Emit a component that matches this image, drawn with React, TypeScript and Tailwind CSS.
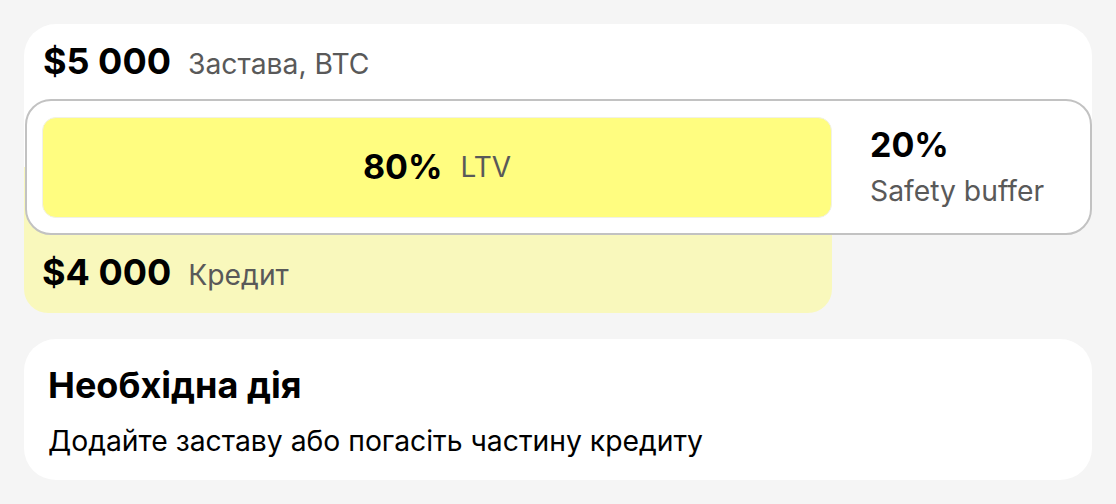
import React from 'react'

const font = { fontFamily: 'Inter, "Noto Sans", sans-serif' }

const LtvCard = () => {
  return (
    <div className="flex flex-col">
      {/* collateral */}
      <div className="h-[143px] rounded-t-[32px] bg-white pl-[19px] pt-[17px]">
        <div className="flex items-baseline gap-[17px]">
          <span className="text-[36px] leading-[40px] font-bold text-black">$5 000</span>
          <span className="text-[28.3px] leading-[36px] text-[#595959]">Застава, BTC</span>
        </div>
      </div>

      {/* ltv box, lies over both cards */}
      <div className="relative z-10 -mt-[68px] ml-px flex h-[136px] items-center rounded-[26px] border-2 border-[#c2c2c2] bg-white p-[15px]">
        <div className="flex h-[101px] w-[790px] items-center justify-center gap-[18px] rounded-[14px] border border-[#f1f1e6] bg-[#fffd80]">
          <span className="text-[34px] leading-[40px] font-bold text-black">80%</span>
          <span className="text-[28px] leading-[36px] text-[#595959]">LTV</span>
        </div>
        <div className="ml-[38px] flex flex-col gap-[8px]">
          <span className="text-[34px] leading-[40px] font-bold text-black">20%</span>
          <span className="text-[28.3px] leading-[36px] text-[#595959]">Safety buffer</span>
        </div>
      </div>

      {/* loan */}
      <div className="-mt-[68px] w-[808px] rounded-b-[24px] bg-[#f9f8bc] pl-[18px] pt-[85px] pb-[20px]">
        <div className="flex items-baseline gap-[17px]">
          <span className="text-[36px] leading-[40px] font-bold text-black">$4 000</span>
          <span className="text-[28.3px] leading-[36px] text-[#595959]">Кредит</span>
        </div>
      </div>
    </div>
  )
}

export default function App() {
  return (
    <div className="min-h-[504px] w-[1116px] bg-[#f5f5f5] p-6" style={font}>
      <LtvCard />

      <div className="mt-[26px] rounded-[32px] bg-white px-6 pt-[26px] pb-[21px]">
        <h2 className="text-[36px] leading-[40px] font-bold text-black">Необхідна дія</h2>
        <p className="mt-[18px] text-[28.3px] leading-[36px] text-black">
          Додайте заставу або погасіть частину кредиту
        </p>
      </div>
    </div>
  )
}
